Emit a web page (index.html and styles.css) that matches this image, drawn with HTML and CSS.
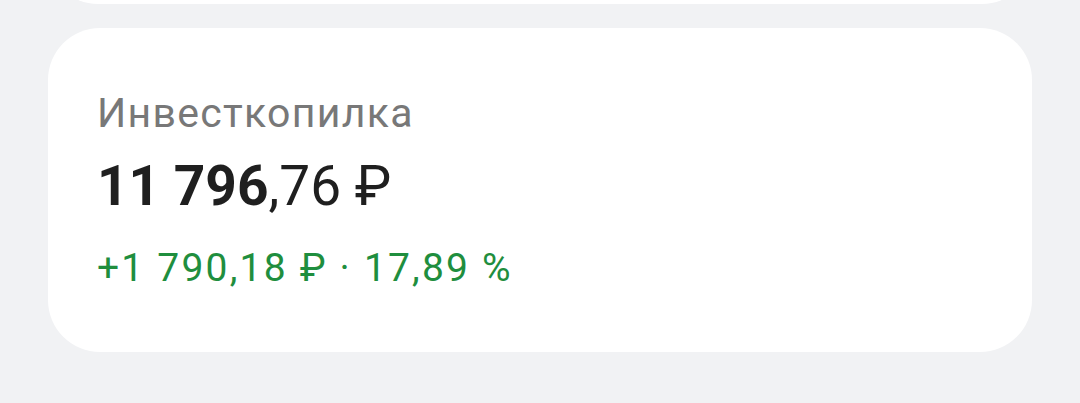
FILE: index.html
```html
<!DOCTYPE html>
<html>
<head lang="ru">
    <meta charset="UTF-8">
    <title>Инвесткопилка</title>
    <link rel="stylesheet" href="styles.css">
</head>
<body>
<div class="card prev"></div>
<div class="card">
    <div class="title">Инвесткопилка</div>
    <div class="amount"><b>11 796</b>,76 ₽</div>
    <div class="profit">+1 790,18 ₽ · 17,89 %</div>
</div>
</body>
</html>
```

FILE: styles.css
```css
*{
    margin: 0;
    padding: 0;
    box-sizing: border-box;
}
body{
    background: #f1f2f4;
    font-family: Roboto, "Noto Sans", sans-serif;
    overflow: hidden;
}
.card{
    margin: 24px 48px 0;
    height: 324px;
    background: #fff;
    border-radius: 52px;
    padding: 61px 49px 0;
}
.prev{
    height: 100px;
    margin-top: -96px;
}
.title{
    font-size: 41px;
    line-height: 48px;
    color: #787878;
    letter-spacing: 1.3px;
}
.amount{
    margin-top: 17px;
    font-size: 55px;
    line-height: 64px;
    color: #1f1f1f;
}
.amount b{
    font-weight: 700;
}
.profit{
    margin-top: 26px;
    font-size: 39px;
    line-height: 48px;
    color: #1f8e3e;
    letter-spacing: 2.2px;
}
```
